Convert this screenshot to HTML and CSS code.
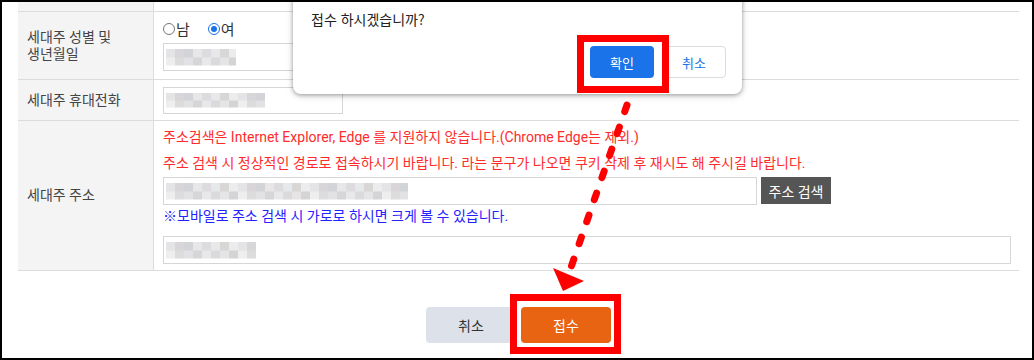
FILE: index.html
```html
<!DOCTYPE html>
<html lang="ko">
<head>
<meta charset="utf-8">
<title>세대주 정보</title>
<link rel="stylesheet" href="styles.css">
</head>
<body>
<div class="frame">
  <div class="form">
    <div class="row row-top">
      <div class="label"></div>
      <div class="cell"></div>
    </div>
    <div class="row row-birth">
      <div class="label">세대주 성별 및<br>생년월일</div>
      <div class="cell cell-stack">
        <div class="radios">
          <span class="radio"></span><span class="radio-text">남</span>
          <span class="radio checked"></span><span class="radio-text">여</span>
        </div>
        <div class="input input-short"><span class="blur blur-a"></span></div>
      </div>
    </div>
    <div class="row row-phone">
      <div class="label">세대주 휴대전화</div>
      <div class="cell cell-center">
        <div class="input input-phone"><span class="blur blur-b"></span></div>
      </div>
    </div>
    <div class="row row-addr">
      <div class="label">세대주 주소</div>
      <div class="cell cell-stack addr">
        <p class="warn">주소검색은 Internet Explorer, Edge 를 지원하지 않습니다.(Chrome Edge는 제외.)</p>
        <p class="warn">주소 검색 시 정상적인 경로로 접속하시기 바랍니다. 라는 문구가 나오면 쿠키 삭제 후 재시도 해 주시길 바랍니다.</p>
        <div class="addr-line">
          <div class="input input-addr"><span class="blur blur-c"></span></div>
          <button class="btn-search">주소 검색</button>
        </div>
        <p class="note">※모바일로 주소 검색 시 가로로 하시면 크게 볼 수 있습니다.</p>
        <div class="input input-full"><span class="blur blur-d"></span></div>
      </div>
    </div>
  </div>

  <div class="actions">
    <button class="btn btn-cancel">취소</button>
    <button class="btn btn-submit">접수</button>
  </div>

  <div class="dialog">
    <div class="dialog-msg">접수 하시겠습니까?</div>
    <div class="dialog-btns">
      <button class="dbtn dbtn-ok">확인</button>
      <button class="dbtn dbtn-cancel">취소</button>
    </div>
  </div>

  <div class="callout callout-ok"></div>
  <div class="callout callout-submit"></div>

  <svg class="arrow" width="1034" height="360" viewBox="0 0 1034 360" aria-hidden="true">
    <path d="M627 105 L568 276" fill="none" stroke="#ff0000" stroke-width="7" stroke-linecap="round" stroke-dasharray="7 16.3"/>
    <polygon points="553,268 584,281 563,291" fill="#ff0000"/>
  </svg>
</div>
</body>
</html>
```

FILE: styles.css
```css
* { box-sizing: border-box; }
html, body { margin: 0; padding: 0; background: #fff; }
body {
  font-family: Roboto, "Noto Sans CJK KR", sans-serif;
  font-size: 14px;
  color: #333;
}
.frame {
  position: relative;
  width: 1034px;
  height: 360px;
  border: 2px solid #000;
  overflow: hidden;
  background: #fff;
}
.form {
  margin-left: 16px;
  width: 1001px;
}
.row {
  display: grid;
  grid-template-columns: 136px 1fr;
  border-bottom: 1px solid #dcdcdc;
}
.row-top { height: 10px; }
.row-birth { height: 68px; }
.row-phone { height: 41px; }
.row-addr { height: 150px; }
.label {
  background: #f4f4f4;
  border-right: 1px solid #dcdcdc;
  padding-left: 9px;
  display: flex;
  align-items: center;
  color: #444;
  font-size: 14px;
  line-height: 17px;
}
.cell { padding-left: 9px; padding-right: 9px; }
.cell-stack { display: flex; flex-direction: column; align-items: flex-start; }
.cell-center { display: flex; align-items: center; }
.row-birth .cell { padding-top: 8px; }
.radios {
  display: flex;
  align-items: center;
  height: 17px;
  font-size: 15px;
  color: #333;
}
.radio {
  width: 12px;
  height: 12px;
  border: 1px solid #767676;
  border-radius: 50%;
  margin-right: 1px;
  background: #fff;
  position: relative;
}
.radio.checked { border-color: #1a73e8; }
.radio.checked::after {
  content: "";
  position: absolute;
  left: 2px; top: 2px;
  width: 6px; height: 6px;
  border-radius: 50%;
  background: #1a73e8;
}
.radio-text { margin-right: 18px; }
.input {
  border: 1px solid #d6d6d6;
  background: #fff;
  height: 28px;
  padding: 3px 2px;
  display: flex;
  align-items: center;
}
.input-short { width: 180px; margin-top: 6px; }
.input-phone { width: 180px; height: 27px; }
.input-addr { width: 594px; }
.input-full { width: 848px; margin-top: 9px; }
.blur {
  display: block;
  height: 17px;
  background:
    repeating-linear-gradient(90deg, #e4e4e7 0 9px, #d8d6d8 9px 18px, #d2d4d8 18px 27px, #e8e6e6 27px 36px, #dcdcdf 36px 45px, #e6e8ea 45px 54px, #d9d6d6 54px 63px, #ececec 63px 72px) top / 100% 50% no-repeat,
    repeating-linear-gradient(90deg, #eeeeee 0 9px, #dddcdc 9px 18px, #e2e2e4 18px 27px, #d6d6d6 27px 36px, #e8e8ea 36px 45px, #dadadc 45px 54px, #e6e4e4 54px 63px, #d4d4d6 63px 72px) bottom / 100% 50% no-repeat;
}
.blur-a { width: 70px; }
.blur-b { width: 99px; height: 15px; }
.blur-c { width: 242px; }
.blur-d { width: 90px; }
.addr { padding-top: 3px; }
.warn {
  margin: 0;
  color: #ff2b2b;
  line-height: 26px;
  white-space: nowrap;
}
.addr-line { display: flex; align-items: flex-start; margin-top: 1px; }
.btn-search {
  margin-left: 4px;
  width: 70px;
  height: 27px;
  border: 0;
  background: #555;
  color: #fff;
  font-family: inherit;
  font-size: 14px;
  padding: 0;
}
.note {
  margin: 0;
  color: #2222ff;
  line-height: 22px;
}
.actions {
  margin-left: 16px;
  width: 1001px;
  display: flex;
  justify-content: center;
  gap: 5px;
  margin-top: 36px;
}
.btn {
  width: 90px;
  height: 36px;
  border: 0;
  border-radius: 4px;
  font-family: inherit;
  font-size: 14px;
  padding: 0;
}
.btn-cancel { background: #dde2ea; color: #333; }
.btn-submit { background: #e86413; color: #fff; }

.dialog {
  position: absolute;
  left: 291px;
  top: -10px;
  width: 449px;
  height: 102px;
  background: #fff;
  border-radius: 8px;
  box-shadow: 0 1px 4px rgba(0,0,0,0.35), 0 2px 8px rgba(0,0,0,0.12);
  padding: 17px 16px 0 18px;
  font-family: "Noto Sans CJK KR", sans-serif;
}
.dialog-msg {
  font-size: 14px;
  line-height: 20px;
  color: #202124;
}
.dialog-btns {
  display: flex;
  justify-content: flex-end;
  gap: 8px;
  margin-top: 17px;
}
.dbtn {
  width: 64px;
  height: 32px;
  border-radius: 4px;
  font-family: inherit;
  font-size: 13px;
  padding: 0;
}
.dbtn-ok { background: #1a73e8; color: #fff; border: 0; }
.dbtn-cancel { background: #fff; color: #1a73e8; border: 1px solid #dadce0; }

.callout {
  position: absolute;
  border: 7px solid #ff0000;
}
.callout-ok { left: 575px; top: 33px; width: 92px; height: 58px; }
.callout-submit { left: 508px; top: 292px; width: 111px; height: 60px; }
.arrow {
  position: absolute;
  left: -2px;
  top: -2px;
  pointer-events: none;
}
```
